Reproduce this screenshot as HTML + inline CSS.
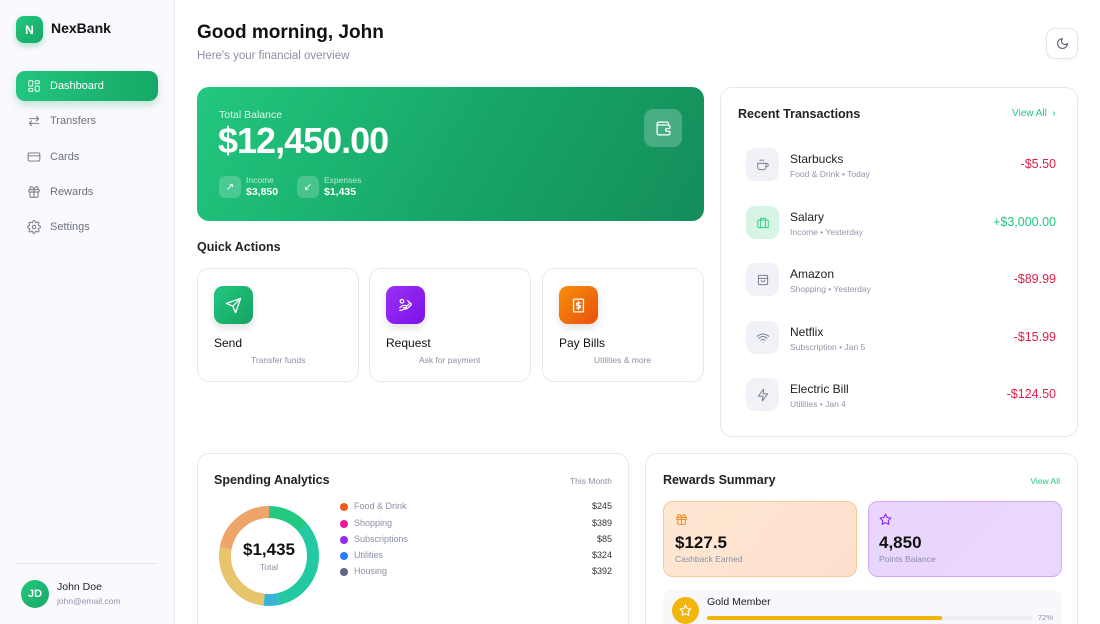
<!DOCTYPE html>
<html style="width:1100px;height:624px;overflow:hidden"><head><meta charset="utf-8"><style>
*{box-sizing:border-box;margin:0;padding:0}
body{width:1100px;height:624px;overflow:hidden;background:#fff;font-family:"Liberation Sans",sans-serif;color:#111827;position:relative}
.abs{position:absolute}
.side{left:0;top:0;width:175px;height:624px;background:#faf9fd;border-right:1px solid #ebeaf2}
.nav{position:absolute;left:16px;width:142px;height:30px;border-radius:9px;display:flex;align-items:center;padding-left:11px;font-size:11px;color:#6b7280;gap:9px}
.nav svg{width:14px;height:14px;fill:none;stroke:#6b7280;stroke-width:1.6;stroke-linecap:round;stroke-linejoin:round}
.card{position:absolute;background:#fff;border:1px solid #e8e8f0;border-radius:12px}
.qa{top:268px;width:162px;height:114px}
.qi{position:absolute;left:16px;top:17px;width:39px;height:38px;border-radius:9px;display:flex;align-items:center;justify-content:center;box-shadow:0 4px 8px rgba(0,0,0,.12)}
.qi svg{width:17px;height:17px;fill:none;stroke:#fff;stroke-width:1.8;stroke-linecap:round;stroke-linejoin:round}
.qt{position:absolute;left:16px;top:67px;font-size:12px;color:#111}
.qs{position:absolute;top:86px;font-size:8.5px;color:#8b8fa6}
.tx{position:absolute;left:25px;width:310px;height:34px}
.ti{position:absolute;left:0;top:0;width:33px;height:33px;border-radius:9px;background:#f1f2f7;display:flex;align-items:center;justify-content:center}
.ti svg{width:14px;height:14px;fill:none;stroke:#6b7080;stroke-width:1.5;stroke-linecap:round;stroke-linejoin:round}
.tn{position:absolute;left:44px;top:4px;font-size:12px;color:#222}
.ts{position:absolute;left:44px;top:21px;font-size:8.5px;color:#9195aa}
.ta{position:absolute;right:0;top:9px;font-size:12.5px;color:#e11d48}
.lg{position:absolute;left:340px;width:272px;font-size:9px;color:#8b8fa6}
.lg i{position:absolute;left:0;top:2px;width:8px;height:8px;border-radius:50%}
.lg span{position:absolute;left:14px}
.lg b{position:absolute;right:0;font-weight:normal;color:#333}
</style></head><body>
<div class="abs side"></div>
<div class="abs" style="left:16px;top:16px;width:27px;height:27px;border-radius:8px;background:linear-gradient(135deg,#22c77e,#17a866);color:#fff;font-weight:bold;font-size:12px;display:flex;align-items:center;justify-content:center;box-shadow:0 3px 6px rgba(23,168,102,.3)">N</div>
<div class="abs" style="left:51px;top:20px;font-size:14px;font-weight:bold;color:#111">NexBank</div>

<div class="nav" style="top:71px;background:linear-gradient(90deg,#22c57f,#17a866);color:#fff;box-shadow:0 4px 8px rgba(23,168,102,.25)"><svg viewBox="0 0 24 24" style="stroke:#fff"><rect x="3" y="3" width="7" height="9" rx="1"/><rect x="14" y="3" width="7" height="5" rx="1"/><rect x="14" y="12" width="7" height="9" rx="1"/><rect x="3" y="16" width="7" height="5" rx="1"/></svg>Dashboard</div>
<div class="nav" style="top:106px"><svg viewBox="0 0 24 24"><path d="M4 8h16M16 4l4 4-4 4M20 16H4M8 12l-4 4 4 4"/></svg>Transfers</div>
<div class="nav" style="top:142px"><svg viewBox="0 0 24 24"><rect x="2" y="5" width="20" height="14" rx="2"/><path d="M2 10h20"/></svg>Cards</div>
<div class="nav" style="top:177px"><svg viewBox="0 0 24 24"><rect x="3" y="8" width="18" height="4" rx="1"/><path d="M12 8v13M19 12v7a2 2 0 0 1-2 2H7a2 2 0 0 1-2-2v-7M7.5 8a2.5 2.5 0 0 1 0-5C11 3 12 8 12 8s1-5 4.5-5a2.5 2.5 0 0 1 0 5"/></svg>Rewards</div>
<div class="nav" style="top:212px"><svg viewBox="0 0 24 24"><circle cx="12" cy="12" r="3"/><path d="M19.4 15a1.7 1.7 0 0 0 .3 1.8l.1.1a2 2 0 1 1-2.8 2.8l-.1-.1a1.7 1.7 0 0 0-1.8-.3 1.7 1.7 0 0 0-1 1.5V21a2 2 0 1 1-4 0v-.1a1.7 1.7 0 0 0-1.1-1.5 1.7 1.7 0 0 0-1.8.3l-.1.1a2 2 0 1 1-2.8-2.8l.1-.1a1.7 1.7 0 0 0 .3-1.8 1.7 1.7 0 0 0-1.5-1H3a2 2 0 1 1 0-4h.1a1.7 1.7 0 0 0 1.5-1.1 1.7 1.7 0 0 0-.3-1.8l-.1-.1a2 2 0 1 1 2.8-2.8l.1.1a1.7 1.7 0 0 0 1.8.3H9a1.7 1.7 0 0 0 1-1.5V3a2 2 0 1 1 4 0v.1a1.7 1.7 0 0 0 1 1.5 1.7 1.7 0 0 0 1.800-.3l.1-.1a2 2 0 1 1 2.8 2.8l-.1.1a1.7 1.7 0 0 0-.3 1.8V9a1.7 1.7 0 0 0 1.5 1H21a2 2 0 1 1 0 4h-.1a1.7 1.7 0 0 0-1.5 1z"/></svg>Settings</div>

<div class="abs" style="left:16px;top:563px;width:142px;height:1px;background:#e5e5ee"></div>
<div class="abs" style="left:21px;top:580px;width:28px;height:28px;border-radius:50%;background:linear-gradient(135deg,#22c77e,#17a866);color:#fff;font-size:11px;font-weight:bold;display:flex;align-items:center;justify-content:center">JD</div>
<div class="abs" style="left:57px;top:581px;font-size:10.5px;color:#222">John Doe</div>
<div class="abs" style="left:57px;top:596px;font-size:8.5px;color:#9195aa">john@email.com</div>

<div class="abs" style="left:197px;top:22px;font-size:19px;font-weight:bold;color:#111">Good morning, John</div>
<div class="abs" style="left:197px;top:50px;font-size:11.5px;color:#8b8fa6">Here's your financial overview</div>
<div class="abs" style="left:1046px;top:28px;width:32px;height:31px;border:1px solid #e4e4ee;border-radius:9px;display:flex;align-items:center;justify-content:center;box-shadow:0 1px 3px rgba(0,0,0,.05)"><svg width="13" height="13" viewBox="0 0 24 24" fill="none" stroke="#555a70" stroke-width="2" stroke-linecap="round" stroke-linejoin="round"><path d="M12 3a6 6 0 0 0 9 9 9 9 0 1 1-9-9z"/></svg></div>

<div class="abs" style="left:197px;top:87px;width:507px;height:134px;border-radius:12px;background:linear-gradient(120deg,#22c77f 0%,#17a567 55%,#148d5a 100%)"></div>
<div class="abs" style="left:219px;top:109px;font-size:10.5px;color:rgba(255,255,255,.85)">Total Balance</div>
<div class="abs" style="left:218px;top:120px;font-size:36px;font-weight:bold;color:#fff;letter-spacing:-1px">$12,450.00</div>
<div class="abs" style="left:644px;top:109px;width:38px;height:38px;border-radius:9px;background:rgba(255,255,255,.22);display:flex;align-items:center;justify-content:center"><svg width="17" height="17" viewBox="0 0 24 24" fill="none" stroke="#fff" stroke-width="1.8" stroke-linejoin="round"><path d="M19 7V5a2 2 0 0 0-2-2H5a2 2 0 0 0 0 4h14a2 2 0 0 1 2 2v3h-4a2 2 0 0 0 0 4h4v3a2 2 0 0 1-2 2H5a2 2 0 0 1-2-2V5"/></svg></div>
<div class="abs" style="left:219px;top:176px;width:22px;height:22px;border-radius:6px;background:rgba(255,255,255,.2);color:#fff;font-size:10px;display:flex;align-items:center;justify-content:center">↗</div>
<div class="abs" style="left:246px;top:175px;font-size:8.5px;color:rgba(255,255,255,.7)">Income</div>
<div class="abs" style="left:246px;top:186px;font-size:10.5px;font-weight:bold;color:#fff">$3,850</div>
<div class="abs" style="left:297px;top:176px;width:22px;height:22px;border-radius:6px;background:rgba(255,255,255,.2);color:#fff;font-size:10px;display:flex;align-items:center;justify-content:center">↙</div>
<div class="abs" style="left:324px;top:175px;font-size:8.5px;color:rgba(255,255,255,.7)">Expenses</div>
<div class="abs" style="left:324px;top:186px;font-size:10.5px;font-weight:bold;color:#fff">$1,435</div>

<div class="abs" style="left:197px;top:240px;font-size:12.5px;font-weight:bold;color:#222">Quick Actions</div>
<div class="card qa" style="left:197px"><div class="qi" style="background:linear-gradient(135deg,#22c77f,#15a263)"><svg viewBox="0 0 24 24"><path d="M22 2L11 13M22 2l-7 20-4-9-9-4z"/></svg></div><div class="qt">Send</div><div class="qs" style="left:53px">Transfer funds</div></div>
<div class="card qa" style="left:369px"><div class="qi" style="background:linear-gradient(135deg,#9b30f5,#7c12e8)"><svg viewBox="0 0 24 24"><circle cx="7" cy="6" r="2.5"/><path d="M4 15l4-3h4a1.5 1.5 0 0 1 0 3h-3M4 19l4-1 7-2 5-5a1.5 1.5 0 0 0-2-2l-3 3M15 5l4 4"/></svg></div><div class="qt">Request</div><div class="qs" style="left:49px">Ask for payment</div></div>
<div class="card qa" style="left:542px"><div class="qi" style="background:linear-gradient(135deg,#f7900c,#ea4f0c)"><svg viewBox="0 0 24 24"><rect x="5" y="3" width="14" height="18" rx="1"/><path d="M14.5 8.5h-3.5a1.7 1.7 0 0 0 0 3.5h2a1.7 1.7 0 0 1 0 3.5H9.5M12 6.5v11"/></svg></div><div class="qt">Pay Bills</div><div class="qs" style="left:51px">Utilities &amp; more</div></div>

<div class="card" style="left:720px;top:87px;width:358px;height:350px">
<div class="abs" style="left:17px;top:19px;font-size:12.5px;font-weight:bold;color:#222">Recent Transactions</div>
<div class="abs" style="left:291px;top:20px;font-size:10px;color:#22c77f">View All &nbsp;›</div>
<div class="tx" style="top:60px"><div class="ti"><svg viewBox="0 0 24 24"><path d="M17 9h1a3 3 0 0 1 0 6h-1M3 9h14v7a4 4 0 0 1-4 4H7a4 4 0 0 1-4-4zM7 3v2M10 3v2M13 3v2"/></svg></div><div class="tn">Starbucks</div><div class="ts">Food &amp; Drink • Today</div><div class="ta">-$5.50</div></div>
<div class="tx" style="top:118px"><div class="ti" style="background:#d6f5e5"><svg viewBox="0 0 24 24" style="stroke:#22c77f"><rect x="3" y="7" width="18" height="13" rx="2"/><path d="M8 7V4h8v3M8 7v13M16 7v13"/></svg></div><div class="tn">Salary</div><div class="ts">Income • Yesterday</div><div class="ta" style="color:#22c77f">+$3,000.00</div></div>
<div class="tx" style="top:175px"><div class="ti"><svg viewBox="0 0 24 24"><rect x="4" y="4" width="16" height="16" rx="2"/><path d="M4 9h16M9 12a3 3 0 0 0 6 0"/></svg></div><div class="tn">Amazon</div><div class="ts">Shopping • Yesterday</div><div class="ta">-$89.99</div></div>
<div class="tx" style="top:233px"><div class="ti"><svg viewBox="0 0 24 24"><path d="M2 9a15 15 0 0 1 20 0M5 12.5a10 10 0 0 1 14 0M8.5 16a5 5 0 0 1 7 0M12 19.5h.01"/></svg></div><div class="tn">Netflix</div><div class="ts">Subscription • Jan 5</div><div class="ta">-$15.99</div></div>
<div class="tx" style="top:290px"><div class="ti"><svg viewBox="0 0 24 24"><path d="M13 2L4 14h8l-1 8 9-12h-8z"/></svg></div><div class="tn">Electric Bill</div><div class="ts">Utilities • Jan 4</div><div class="ta">-$124.50</div></div>
</div>

<div class="card" style="left:197px;top:453px;width:432px;height:200px">
<div class="abs" style="left:16px;top:19px;font-size:12.5px;font-weight:bold;color:#222">Spending Analytics</div>
<div class="abs" style="right:16px;top:22px;font-size:8.5px;color:#8b8fa6">This Month</div>
<svg class="abs" style="left:20px;top:51px" width="102" height="102" viewBox="0 0 102 102">
<g transform="rotate(-90 51 51)" fill="none" stroke-width="12">
<circle cx="51" cy="51" r="44" stroke="#22c97e" stroke-dasharray="38 300" stroke-dashoffset="0"/>
<circle cx="51" cy="51" r="44" stroke="#22c9a3" stroke-dasharray="91 300" stroke-dashoffset="-38"/>
<circle cx="51" cy="51" r="44" stroke="#38b4d6" stroke-dasharray="14 300" stroke-dashoffset="-129"/>
<circle cx="51" cy="51" r="44" stroke="#e8c56d" stroke-dasharray="72 300" stroke-dashoffset="-143"/>
<circle cx="51" cy="51" r="44" stroke="#eea46a" stroke-dasharray="62 300" stroke-dashoffset="-215"/>
</g></svg>
<div class="abs" style="left:20px;top:86px;width:102px;text-align:center;font-size:17px;font-weight:bold;color:#111">$1,435</div>
<div class="abs" style="left:20px;top:108px;width:102px;text-align:center;font-size:8.5px;color:#8b8fa6">Total</div>
</div>
<div class="lg" style="top:501px;left:340px"><i style="background:#f15a1a"></i><span>Food &amp; Drink</span><b>$245</b></div>
<div class="lg" style="top:518px;left:340px"><i style="background:#e8189a"></i><span>Shopping</span><b>$389</b></div>
<div class="lg" style="top:534px;left:340px"><i style="background:#9b27f0"></i><span>Subscriptions</span><b>$85</b></div>
<div class="lg" style="top:550px;left:340px"><i style="background:#2a7ef5"></i><span>Utilities</span><b>$324</b></div>
<div class="lg" style="top:566px;left:340px"><i style="background:#5b6780"></i><span>Housing</span><b>$392</b></div>

<div class="card" style="left:645px;top:453px;width:433px;height:200px">
<div class="abs" style="left:17px;top:19px;font-size:12.5px;font-weight:bold;color:#222">Rewards Summary</div>
<div class="abs" style="right:17px;top:22px;font-size:8.5px;color:#22c77f">View All</div>
<div class="abs" style="left:17px;top:47px;width:194px;height:76px;border-radius:10px;background:linear-gradient(135deg,#fee8d2,#fde0cf);border:1px solid #f8c99a"></div>
<div class="abs" style="left:222px;top:47px;width:194px;height:76px;border-radius:10px;background:linear-gradient(135deg,#e9d5fd,#ead8fc);border:1px solid #d1a9f7"></div>
<svg class="abs" style="left:29px;top:59px" width="13" height="13" viewBox="0 0 24 24" fill="none" stroke="#f28c28" stroke-width="2" stroke-linecap="round" stroke-linejoin="round"><rect x="3" y="8" width="18" height="4" rx="1"/><path d="M12 8v13M19 12v7a2 2 0 0 1-2 2H7a2 2 0 0 1-2-2v-7M7.5 8a2.5 2.5 0 0 1 0-5C11 3 12 8 12 8s1-5 4.5-5a2.5 2.5 0 0 1 0 5"/></svg>
<svg class="abs" style="left:233px;top:59px" width="13" height="13" viewBox="0 0 24 24" fill="none" stroke="#8b2cf0" stroke-width="2" stroke-linejoin="round"><path d="M12 2l3 6.3 7 1-5 4.9 1.2 6.8L12 17.8 5.8 21l1.2-6.8-5-4.9 7-1z"/></svg>
<div class="abs" style="left:29px;top:79px;font-size:17px;font-weight:bold;color:#111">$127.5</div>
<div class="abs" style="left:29px;top:100px;font-size:8.5px;color:#8b8fa6">Cashback Earned</div>
<div class="abs" style="left:233px;top:79px;font-size:17px;font-weight:bold;color:#111">4,850</div>
<div class="abs" style="left:233px;top:100px;font-size:8.5px;color:#8b8fa6">Points Balance</div>
<div class="abs" style="left:17px;top:135px;width:399px;height:60px;border-radius:10px;background:#f8f8fc"></div>
<div class="abs" style="left:26px;top:143px;width:27px;height:27px;border-radius:50%;background:#f2b50c;display:flex;align-items:center;justify-content:center"><svg width="13" height="13" viewBox="0 0 24 24" fill="none" stroke="#fff" stroke-width="2" stroke-linejoin="round"><path d="M12 2l3 6.3 7 1-5 4.9 1.2 6.8L12 17.8 5.8 21l1.2-6.8-5-4.9 7-1z"/></svg></div>
<div class="abs" style="left:61px;top:142px;font-size:10.5px;color:#222">Gold Member</div>
<div class="abs" style="left:61px;top:162px;width:325px;height:4px;border-radius:2px;background:#ececf2"><div style="width:235px;height:4px;border-radius:2px;background:#f2b50c"></div></div>
<div class="abs" style="left:392px;top:159px;font-size:7.5px;color:#8b8fa6">72%</div>
</div>
</body></html>
